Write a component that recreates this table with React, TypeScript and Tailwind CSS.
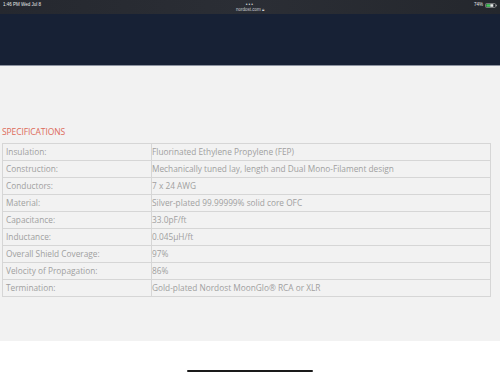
import React from 'react';

const specs: [string, string][] = [
  ['Insulation:', 'Fluorinated Ethylene Propylene (FEP)'],
  ['Construction:', 'Mechanically tuned lay, length and Dual Mono-Filament design'],
  ['Conductors:', '7 x 24 AWG'],
  ['Material:', 'Silver-plated 99.99999% solid core OFC'],
  ['Capacitance:', '33.0pF/ft'],
  ['Inductance:', '0.045µH/ft'],
  ['Overall Shield Coverage:', '97%'],
  ['Velocity of Propagation:', '86%'],
  ['Termination:', 'Gold-plated Nordost MoonGlo® RCA or XLR'],
];

const StatusBar = () => (
  <div className="h-[14px] bg-gradient-to-r from-[#25282f] via-[#2b2e35] to-[#24272d] flex items-start justify-between px-[3px] text-white text-[4.5px] leading-none font-['Liberation_Sans',sans-serif] relative">
    <span className="pt-[3px] opacity-90">1:46 PM  Wed Jul 8</span>
    <div className="absolute left-1/2 -translate-x-1/2 top-[2px] flex flex-col items-center">
      <span className="text-[5px] leading-[5px] tracking-[1px] text-[#cfd2d8]">•••</span>
      <span className="text-[#c9ccd2] mt-[1px]">nordost.com 🔒︎</span>
    </div>
    <div className="pt-[3px] flex items-center gap-[2px] opacity-90">
      <span>74%</span>
      <svg width="12" height="5" viewBox="0 0 12 5">
        <rect x="0.5" y="0.5" width="10" height="4" rx="1" fill="none" stroke="#bbb" strokeWidth="0.6" />
        <rect x="1.3" y="1.2" width="4" height="2.6" fill="#4cd964" />
        <rect x="5.3" y="1.2" width="3" height="2.6" fill="#fff" />
        <rect x="11" y="1.7" width="0.8" height="1.6" fill="#bbb" />
      </svg>
    </div>
  </div>
);

export default function App() {
  return (
    <div className="w-[500px] h-[375px] bg-white overflow-hidden flex flex-col font-['Open_Sans',sans-serif]">
      <StatusBar />
      <div className="h-[52px] bg-[#172135] border-b border-[#8d93a0]" />
      <div className="h-[275px] bg-[#f2f2f2] pl-[2px] pr-[9px]">
        <h2 className="mt-[60px] text-[8.5px] leading-[11px] text-[#dd6b5a] tracking-[-0.1px]">SPECIFICATIONS</h2>
        <table className="mt-[6px] w-full border-collapse border border-[#d6d6d6] text-[8.3px] text-[#a0a0a0]">
          <tbody>
            {specs.map(([label, value]) => (
              <tr key={label}>
                <td className="w-[149px] h-[17px] pl-[3px] border border-[#d6d6d6] align-middle">{label}</td>
                <td className="h-[17px] border border-[#d6d6d6] align-middle">{value}</td>
              </tr>
            ))}
          </tbody>
        </table>
      </div>
      <div className="flex-1 flex items-end justify-center pb-[3px]">
        <div className="w-[126px] h-[2px] rounded-full bg-[#1a1a1a]" />
      </div>
    </div>
  );
}
